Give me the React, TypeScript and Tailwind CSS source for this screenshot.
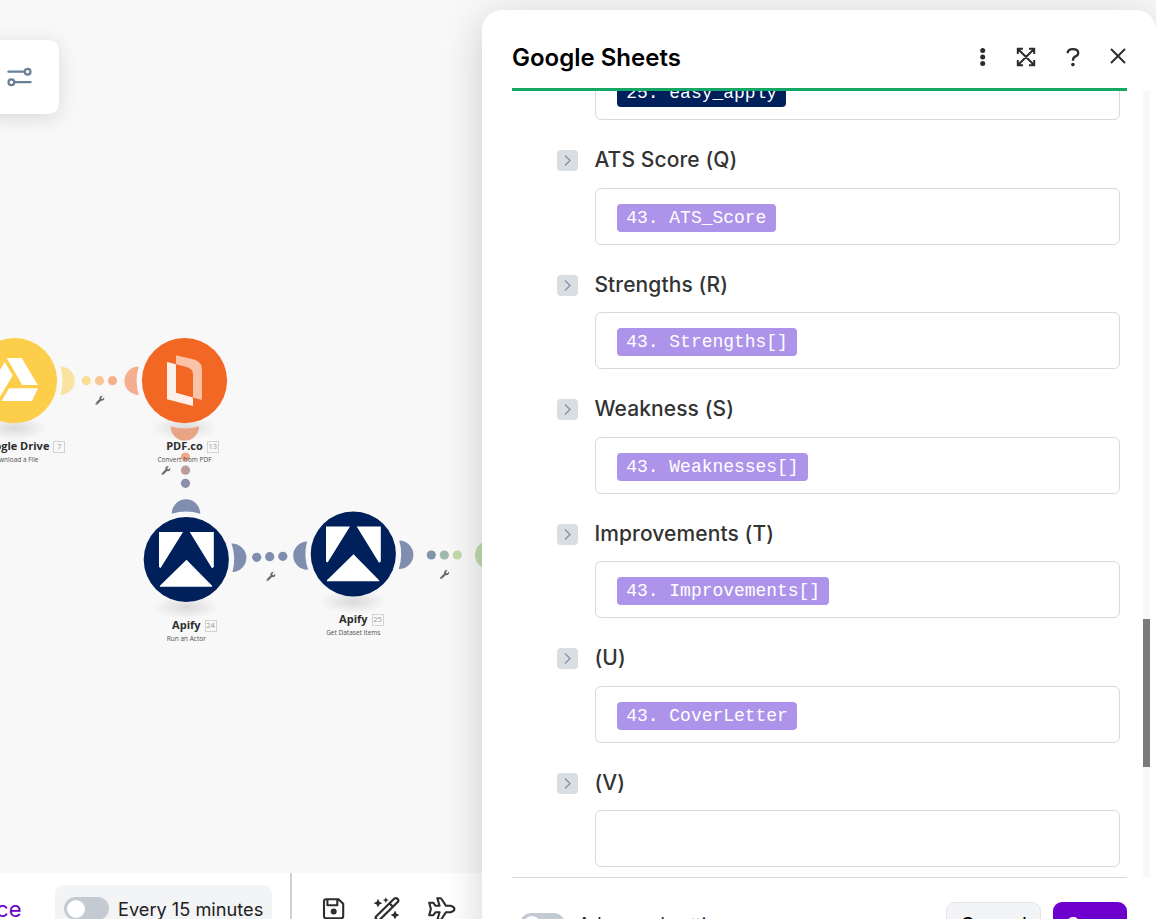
import type { ReactNode } from 'react';
import { FaWrench } from 'react-icons/fa';

const NAVY = '#00205b';

const fields = [
  { label: 'ATS Score (Q)', value: '43. ATS_Score' },
  { label: 'Strengths (R)', value: '43. Strengths[]' },
  { label: 'Weakness (S)', value: '43. Weaknesses[]' },
  { label: 'Improvements (T)', value: '43. Improvements[]' },
  { label: '(U)', value: '43. CoverLetter' },
  { label: '(V)', value: '' },
];

const dots = [
  [86.3, 380.7, '#fadc95'], [99.5, 380.7, '#f9c795'], [112.5, 380.7, '#f6b08f'],
  [185.5, 457, '#f0a68a'], [185.5, 470.2, '#bb9c9b'], [185.5, 483.3, '#898fac'],
  [256.7, 557.3, '#7f8eae'], [269.7, 556.7, '#7f8eae'], [282.8, 556.3, '#7f8eae'],
  [431.3, 555, '#8293ae'], [444.3, 555, '#a3b8ae'], [457.3, 555, '#c1dbaa'],
] as const;

const wrenches = [[95.3, 395.7], [161.3, 466], [266.3, 572], [440, 570]] as const;

function Moon({ x, y, r, color }: { x: number; y: number; r: number; color: string }) {
  return (
    <path
      transform={`translate(${x} ${y}) rotate(${r})`}
      d="M45.4-14.2A14.4 14.2 0 0 1 45.4 14.2A48 48 0 0 0 45.4-14.2Z"
      fill={color}
    />
  );
}

function Node({ x, y, color, children }: { x: number; y: number; color: string; children: ReactNode }) {
  return (
    <g transform={`translate(${x} ${y})`}>
      <circle r="42.6" fill={color} />
      {children}
    </g>
  );
}

function ApifyMark() {
  return (
    <path
      fill="#fff"
      d="M-27.3-27.5H-3.3L-25.7 8.6L-27.3 7.6ZM27.5-27.5H3.4L25.7 8.8L27.5 7.6ZM.2.2L-26.4 26.2V27.2H25.8V26.2Z"
    />
  );
}

function NodeLabel({ className, name, id, sub }: { className: string; name: string; id: string; sub: string }) {
  return (
    <div className={`absolute flex w-[120px] flex-col items-center font-['Open_Sans',sans-serif] ${className}`}>
      <div className="relative text-[11px] leading-[14px] font-bold text-[#2d2d2d]">
        {name}
        <span className="absolute top-[2px] left-full ml-[4px] flex h-[12px] w-[12px] items-center justify-center border border-[#d3d3d3] text-[7.5px] leading-none font-normal text-[#9a9a9a]">
          {id}
        </span>
      </div>
      <div className="mt-px text-[6.5px] leading-[12px] whitespace-nowrap text-[#505050]">{sub}</div>
    </div>
  );
}

function Canvas() {
  return (
    <>
      <svg className="absolute top-0 left-0" width="482" height="873" viewBox="0 0 482 873">
        <defs>
          <radialGradient id="ground">
            <stop offset="0" stopColor="#000" stopOpacity=".12" />
            <stop offset=".5" stopColor="#000" stopOpacity=".06" />
            <stop offset="1" stopColor="#000" stopOpacity="0" />
          </radialGradient>
        </defs>
        {[[14.5, 428], [184.5, 428], [186.3, 607], [353.3, 601.5]].map(([x, y]) => (
          <ellipse key={`${x}`} cx={x} cy={y} rx="34" ry="12" fill="url(#ground)" />
        ))}
        <Moon x={14.9} y={380.7} r={0} color="#fae2a0" />
        <Moon x={184.2} y={380.7} r={180} color="#f5ae8f" />
        <Moon x={184.8} y={380.8} r={90} color="#e9a385" />
        <Moon x={186} y={559.1} r={-90} color="#7f8eae" />
        <Moon x={186.6} y={559.4} r={-2} color="#7f8eae" />
        <Moon x={353} y={554} r={178} color="#7f8eae" />
        <Moon x={353.6} y={554} r={1} color="#7f8eae" />
        <Moon x={534.8} y={555} r={180} color="#c1dbaa" />
        <Node x={14.5} y={380.6} color="#fcce4a">
          <path
            fill="#fff"
            d="M-7.8-22.6H7.2L23.3 4.4H7.7ZM-5.4 7.6H23.5L17.5 20.4H-12.9ZM-9.8-18.6L-1.8-5L-17 20.4L-25 7Z"
          />
        </Node>
        <Node x={184.5} y={380.6} color="#f26724">
          <path fill="#fff" fillOpacity=".9" d="M-17.5-18.6L-8.5-16.3V12.1L8.5 16.8V25.4L-17.5 18.7Z" />
          <path fill="#fff" fillOpacity=".6" d="M-8.5-25.3L10.5-20.8Q17.5-18 17.5-11V19.4L8.5 17V-6Q8.5-11.5 3-13.3L-8.5-16.3Z" />
        </Node>
        <Node x={186.3} y={559.5} color={NAVY}><ApifyMark /></Node>
        <Node x={353.3} y={554} color={NAVY}><ApifyMark /></Node>
        {dots.map(([x, y, c]) => (
          <circle key={`${x}-${y}`} cx={x} cy={y} r="4.6" fill={c} />
        ))}
        {wrenches.map(([x, y]) => (
          <FaWrench key={x} x={x} y={y} size={9.2} color="#6b6b6b" />
        ))}
      </svg>
      <NodeLabel className="top-[439px] left-[-45.5px]" name="Google Drive" id="7" sub="Download a File" />
      <NodeLabel className="top-[439px] left-[124.5px]" name="PDF.co" id="13" sub="Convert from PDF" />
      <NodeLabel className="top-[618px] left-[126.3px]" name="Apify" id="24" sub="Run an Actor" />
      <NodeLabel className="top-[612px] left-[293.3px]" name="Apify" id="25" sub="Get Dataset Items" />
      <div className="absolute top-[40px] left-[-20px] flex h-[74px] w-[79px] items-center rounded-[10px] bg-white pl-[27px] shadow-[0_4px_20px_rgba(0,0,0,0.13)]">
        <svg width="25" height="20" viewBox="0 0 25 20" fill="none" stroke="#6b7f92" strokeWidth="2.2" strokeLinecap="round">
          <path d="M1.4 4.7H17M8 15.2H23.6" />
          <circle cx="20.6" cy="4.7" r="2.9" />
          <circle cx="4.4" cy="15.2" r="2.9" />
        </svg>
      </div>
    </>
  );
}

function BottomBar() {
  return (
    <div className="flex h-[46px] w-full bg-white">
      <div className="flex w-[55px] shrink-0 pt-[22px]">
        <span className="flex w-[21.5px] justify-end text-[22px] leading-[28px] whitespace-nowrap text-[#6d00cc]">ce</span>
      </div>
      <div className="mt-[12px] flex h-[50px] w-[217px] shrink-0 rounded-[9px] bg-[#f3f4f6] pl-[9px]">
        <span className="mt-[12px] flex h-[23px] w-[45px] rounded-full bg-[#c3cad1] p-[3px]">
          <span className="size-[17.5px] rounded-full bg-white" />
        </span>
        <span className="mt-[12px] ml-[9px] text-[18.2px] leading-[25px] whitespace-nowrap text-[#212121]">Every 15 minutes</span>
      </div>
      <div className="ml-[18px] h-full w-[2px] bg-[#cbd1da]" />
      <div className="mt-[23px] ml-[30px] flex gap-[27px] text-[#2d2d2d]">
        <svg width="24" height="26" viewBox="0 0 24 26" fill="none" stroke="currentColor" strokeWidth="2.1">
          <path d="M4 3.3H16.5L21.2 7.8V20Q21.2 22.3 19 22.3H4Q2 22.3 2 20V5.3Q2 3.3 4 3.3ZM5.4 3.5V9.2H15.3V3.5" strokeLinejoin="round" />
          <circle cx="11.7" cy="15.6" r="3" fill="currentColor" stroke="none" />
        </svg>
        <svg width="27" height="26" viewBox="-1 0 27 26" fill="none" stroke="currentColor" strokeWidth="2.2">
          <path d="M2.6 19.4L20.4 2Q22.2.6 23.8 2Q25.4 3.6 24 5.3L6.2 22.8Q4.4 24.2 2.8 22.6Q1.2 21 2.6 19.4ZM16 6.8L19.2 10" transform="translate(-.3 .8)" />
          <path fill="currentColor" stroke="none" d="M4 2.8L5.4 5.8L8.4 7.2L5.4 8.6L4 11.6L2.6 8.6L-.4 7.2L2.6 5.8ZM11.8 1.2L12.7 3.2L14.7 4.1L12.7 5L11.8 7L10.9 5L8.9 4.1L10.9 3.2ZM21 14.6L22.4 17.6L25.4 19L22.4 20.4L21 23.4L19.6 20.4L16.6 19L19.6 17.6Z" />
        </svg>
        <svg width="29" height="27" viewBox="0 0 29 27" fill="none" stroke="currentColor" strokeWidth="2.1" strokeLinejoin="round">
          <path d="M10.3 2.2H13.2Q14 2.2 14.5 3L19 9.8H23.5Q27.4 10.8 27.4 13Q27.4 15.2 23.5 16.2H19L14.5 23Q14 23.8 13.2 23.8H10.3L12.6 16.2H8.6L6.2 19.3H2.2L3.9 13L2.2 6.7H6.2L8.6 9.8H12.6Z" />
        </svg>
      </div>
    </div>
  );
}

function Field({ label, value }: { label: string; value: string }) {
  return (
    <div className="flex h-[124.5px] shrink-0 gap-[17px] pl-[45px]">
      <span className="mt-[30px] flex size-[21px] items-center justify-center rounded-[4px] bg-[#d9dee3]">
        <svg width="9" height="13" viewBox="0 0 9 13" fill="none" stroke="#8192a6" strokeWidth="1.3">
          <path d="M2 1.5L7 6.5L2 11.5" />
        </svg>
      </span>
      <div className="flex w-[525px] flex-col">
        <div className="mt-[25px] mb-[13.5px] ml-[-0.6px] text-[21px] leading-[29px] font-medium tracking-[0.1px] text-[#333]">{label}</div>
        <div className="flex h-[57px] items-center rounded-[6px] border border-[#d9d9d9] pt-[3px] pl-[21px]">
          {value && <Pill className="bg-[#ad94ea]">{value}</Pill>}
        </div>
      </div>
    </div>
  );
}

function Pill({ className, children }: { className: string; children: ReactNode }) {
  return (
    <span className={`flex h-[28px] items-center rounded-[4px] px-[9.3px] pt-px font-['Courier_New','Liberation_Mono',monospace] text-[17.95px] whitespace-pre text-white ${className}`}>
      {children}
    </span>
  );
}

function Panel() {
  return (
    <div className="absolute top-[10px] left-[482px] flex h-[940px] w-[674px] flex-col rounded-t-[20px] bg-white shadow-[0_8px_40px_rgba(0,0,0,0.18)]">
      <div className="mx-[30px] flex h-[81px] w-[615px] shrink-0 justify-between border-b-[3px] border-[#14a864]">
        <h1 className="mt-[30px] text-[24px] leading-[36px] font-semibold text-black">Google Sheets</h1>
        <div className="mt-[35px] flex h-[24px] items-center text-[#2d2d2d]">
          <svg width="6" height="20" viewBox="0 0 6 20" fill="currentColor">
            <circle cx="2.7" cy="3.5" r="2.5" /><circle cx="2.7" cy="10" r="2.5" /><circle cx="2.7" cy="16.5" r="2.5" />
          </svg>
          <svg className="ml-[30px]" width="20" height="20" viewBox="0 0 20 20" fill="none" stroke="currentColor" strokeWidth="2">
            <path d="M1.8 7V1.8H7M13 1.8H18.2V7M18.2 13V18.2H13M7 18.2H1.8V13M2 2L18 18M18 2L2 18" />
          </svg>
          <svg className="ml-[30px]" width="14" height="20" viewBox="0 0 14 20" fill="none" stroke="currentColor" strokeWidth="2.3">
            <path d="M1.6 6.2Q1.6 2.1 6.8 2.1Q12.2 2.1 12.2 5.9Q12.2 8.2 9.4 9.4Q6.9 10.6 6.9 13.8" />
            <circle cx="6.9" cy="17.6" r="1.8" fill="currentColor" stroke="none" />
          </svg>
          <svg className="mr-px mb-[2px] ml-[30px]" width="16" height="16" viewBox="0 0 16 16" fill="none" stroke="currentColor" strokeWidth="2">
            <path d="M1 1L15 15M15 1L1 15" />
          </svg>
        </div>
      </div>
      <div className="flex h-[786px] shrink-0 overflow-hidden">
        <div className="ml-[30px] flex w-[615px] flex-col overflow-hidden">
          <div className="mt-[-28px] ml-[83px] flex h-[57px] w-[525px] shrink-0 items-center rounded-[6px] border border-[#d9d9d9] pt-[3px] pl-[21px]">
            <Pill className="bg-[#00205b]">25. easy_apply</Pill>
          </div>
          {fields.map((f) => <Field key={f.label} {...f} />)}
        </div>
        <div className="ml-[16px] w-[7px] bg-[#f8f8f8] pt-[528px]">
          <div className="h-[148px] bg-[#7b7b7b]" />
        </div>
      </div>
      <div className="mx-[30px] flex w-[615px] border-t border-[#d9d9d9] pl-[8px]">
        <span className="mt-[35px] flex h-[23px] w-[45px] rounded-full bg-[#c3cad1] p-[3px]">
          <span className="size-[17.5px] rounded-full bg-white" />
        </span>
        <span className="mt-[33px] ml-[13px] text-[18.2px] leading-[27px] text-[#212121]">Advanced settings</span>
        <div className="mt-[24px] ml-auto flex gap-[12px] text-[20.4px]">
          <button className="h-[46px] w-[95px] rounded-[9px] border border-[#e2e6ea] bg-[#f3f4f6] text-black">Cancel</button>
          <button className="h-[46px] w-[74px] rounded-[9px] bg-[#6d00cc] text-white">Save</button>
        </div>
      </div>
    </div>
  );
}

export default function App() {
  return (
    <div className="relative flex h-[919px] w-[1156px] flex-col justify-end overflow-hidden bg-[#f8f8f8] font-[Inter,sans-serif]">
      <Canvas />
      <BottomBar />
      <Panel />
    </div>
  );
}
